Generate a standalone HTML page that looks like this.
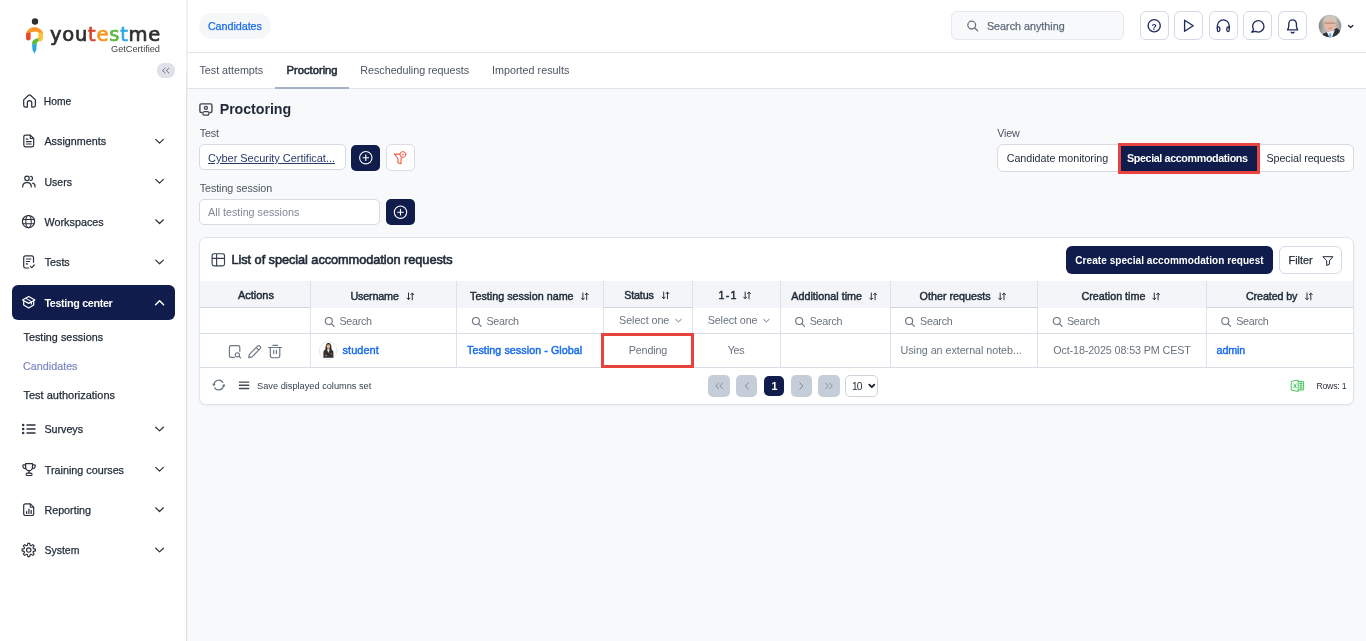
<!DOCTYPE html>
<html lang="en">
<head>
<meta charset="utf-8">
<title>Proctoring - Special accommodations</title>
<style>
*{box-sizing:border-box;margin:0;padding:0}
html,body{width:1366px;height:641px;overflow:hidden;background:#f8f9fb;font-family:"Liberation Sans",Arial,sans-serif;color:#1f2937;font-size:11px}
.t{position:absolute;white-space:pre;line-height:16px;height:16px}
.b{position:absolute}
svg{position:absolute;overflow:visible;fill:none;stroke-linecap:round;stroke-linejoin:round}
#txt{position:absolute;left:0;top:0;width:1366px;height:641px;will-change:transform}

</style>
</head>
<body>
<div class="b" style="left:0px;top:0px;width:186px;height:641px;background:#fff"></div>
<div class="b" style="left:186px;top:0px;width:1px;height:72px;background:#ebeef2"></div>
<div class="b" style="left:186px;top:72px;width:1px;height:569px;background:#dfe3e9"></div>
<div class="b" style="left:187px;top:0px;width:1px;height:641px;background:#f1f3f6"></div>
<div class="b" style="left:188px;top:0px;width:1178px;height:52px;background:#fff"></div>
<div class="b" style="left:187px;top:52px;width:1179px;height:1px;background:#dfe4ea"></div>
<div class="b" style="left:188px;top:53px;width:1178px;height:35px;background:#fff"></div>
<div class="b" style="left:187px;top:88px;width:1179px;height:1px;background:#e1e5eb"></div>
<div class="b" style="left:275px;top:87px;width:74px;height:2px;background:#a7b0c9"></div>
<div class="b" style="left:157px;top:63.4px;width:18px;height:14.3px;background:#dfe3e9;border-radius:6.5px"></div>
<div class="b" style="left:11.5px;top:285px;width:163.7px;height:35px;background:#101d4c;border-radius:6px"></div>
<div class="b" style="left:198.5px;top:12.5px;width:72.5px;height:26.5px;background:#f6f7f9;border-radius:14px"></div>
<div class="b" style="left:951px;top:11px;width:173px;height:29px;background:#f8f9fb;border:1px solid #e5e8ee;border-radius:6px"></div>
<div class="b" style="left:1139.7px;top:11.2px;width:29px;height:29px;background:#fff;border:1px solid #d3d9e5;border-radius:6px"></div>
<div class="b" style="left:1174.2px;top:11.2px;width:29px;height:29px;background:#fff;border:1px solid #d3d9e5;border-radius:6px"></div>
<div class="b" style="left:1209px;top:11.2px;width:29px;height:29px;background:#fff;border:1px solid #d3d9e5;border-radius:6px"></div>
<div class="b" style="left:1243.4px;top:11.2px;width:29px;height:29px;background:#fff;border:1px solid #d3d9e5;border-radius:6px"></div>
<div class="b" style="left:1278.2px;top:11.2px;width:29px;height:29px;background:#fff;border:1px solid #d3d9e5;border-radius:6px"></div>
<div class="b" style="left:199px;top:144px;width:147px;height:26.3px;background:#fff;border:1px solid #d5dae3;border-radius:5px"></div>
<div class="b" style="left:351.2px;top:144.6px;width:29px;height:26px;background:#101d4c;border-radius:5px"></div>
<div class="b" style="left:386.2px;top:144.4px;width:28.7px;height:26.3px;background:#fff;border:1px solid #d8dde6;border-radius:5px"></div>
<div class="b" style="left:199px;top:198.7px;width:181.3px;height:26.3px;background:#fff;border:1px solid #d5dae3;border-radius:5px"></div>
<div class="b" style="left:386px;top:199.2px;width:29px;height:26px;background:#101d4c;border-radius:5px"></div>
<div class="b" style="left:996.5px;top:144px;width:357.3px;height:28px;background:#fff;border:1px solid #d5dae3;border-radius:6px"></div>
<div class="b" style="left:1118px;top:143px;width:142px;height:31px;background:#e9433f"></div>
<div class="b" style="left:1121px;top:146px;width:136px;height:25px;background:#101d4c"></div>
<div class="b" style="left:198.7px;top:237px;width:1155.3px;height:167.8px;background:#fff;border:1px solid #dfe3ea;border-radius:7px;box-shadow:0 1px 2px rgba(16,24,40,.05)"></div>
<div class="b" style="left:1066.2px;top:246px;width:206.6px;height:27.5px;background:#101d4c;border-radius:6px"></div>
<div class="b" style="left:1279.1px;top:246px;width:62.6px;height:27.5px;background:#fff;border:1px solid #d5dbe6;border-radius:6px"></div>
<div class="b" style="left:199.7px;top:281px;width:1153.3px;height:26.8px;background:#f3f5f8"></div>
<div class="b" style="left:199.7px;top:307px;width:110.30000000000001px;height:1px;background:#cfd6e0"></div>
<div class="b" style="left:603.5px;top:307px;width:89.0px;height:1px;background:#cfd6e0"></div>
<div class="b" style="left:890.7px;top:307px;width:146.70000000000005px;height:1px;background:#cfd6e0"></div>
<div class="b" style="left:1206.5px;top:307px;width:146.5px;height:1px;background:#cfd6e0"></div>
<div class="b" style="left:199.7px;top:333px;width:1153.3px;height:1px;background:#d9dee6"></div>
<div class="b" style="left:199.7px;top:367px;width:1153.3px;height:1px;background:#d9dee6"></div>
<div class="b" style="left:309.5px;top:281px;width:1px;height:87px;background:#dde2ea"></div>
<div class="b" style="left:456px;top:281px;width:1px;height:87px;background:#dde2ea"></div>
<div class="b" style="left:603px;top:281px;width:1px;height:87px;background:#dde2ea"></div>
<div class="b" style="left:692.3px;top:281px;width:1px;height:87px;background:#dde2ea"></div>
<div class="b" style="left:780px;top:281px;width:1px;height:87px;background:#dde2ea"></div>
<div class="b" style="left:890.3px;top:281px;width:1px;height:87px;background:#dde2ea"></div>
<div class="b" style="left:1037px;top:281px;width:1px;height:87px;background:#dde2ea"></div>
<div class="b" style="left:1206.2px;top:281px;width:1px;height:87px;background:#dde2ea"></div>
<div class="b" style="left:601.3px;top:333.3px;width:92.6px;height:34.5px;border:3px solid #e8423f"></div>
<div class="b" style="left:708.4px;top:375.1px;width:21.5px;height:21.5px;background:#c5cdd8;border-radius:5px"></div>
<div class="b" style="left:735.8px;top:375.1px;width:21.5px;height:21.5px;background:#c5cdd8;border-radius:5px"></div>
<div class="b" style="left:790.7px;top:375.1px;width:21.5px;height:21.5px;background:#c5cdd8;border-radius:5px"></div>
<div class="b" style="left:818px;top:375.1px;width:21.5px;height:21.5px;background:#c5cdd8;border-radius:5px"></div>
<div class="b" style="left:763.8px;top:375.7px;width:20.4px;height:20.2px;background:#101d4c;border-radius:5px"></div>
<div class="b" style="left:845.3px;top:375px;width:33px;height:21.5px;background:#fff;border:1px solid #cdd3dd;border-radius:5px"></div>
<svg width="1366" height="641" viewBox="0 0 1366 641" style="left:0;top:0">
<path d="M165.2 68.2 L162.6 70.6 L165.2 73 M168.9 68.2 L166.3 70.6 L168.9 73" stroke="#5b6577" stroke-width="0.9"/>
<circle cx="35" cy="21.5" r="3.2" fill="#2e2e2e" stroke="none"/>
<path d="M38.3 31.2 L42.95 32.2 V37.3 C42.95 40 41.5 41.6 39.3 41.6 L38.3 41.6 Z" fill="#fbc531" stroke="none"/>
<path d="M26.1 33.1 L30.6 31.4 V38.2 A2.25 2.25 0 0 1 26.1 38.2 Z" fill="#e8452c" stroke="none"/>
<path d="M26.2 33.3 C27.4 29.2 31 27.3 34.5 27.3 C38 27.3 41.6 29.2 42.95 32.8 L38.3 32.4 C37.4 31.9 36 31.75 34.5 31.75 C33 31.75 31.6 31.9 30.5 32.4 Z" fill="#f9972b" stroke="none"/>
<path d="M38.5 37.9 C35 38.6 32.1 40 32.1 43.2 V44.6 H36.7 V43.6 C36.7 42.5 37.4 41.9 38.5 41.6 Z" fill="#5cbb3c" stroke="none"/>
<path d="M32.1 44.2 H36.7 L36.3 50 L34.4 53.6 L32.5 50 Z" fill="#2aa7e1" stroke="none"/>
<path d="M155.7 139.39999999999998 L159.55 143.1 L163.4 139.39999999999998" stroke="#2b313c" stroke-width="1.2" fill="none" />
<path d="M155.7 179.39999999999998 L159.55 183.1 L163.4 179.39999999999998" stroke="#2b313c" stroke-width="1.2" fill="none" />
<path d="M155.7 219.79999999999998 L159.55 223.5 L163.4 219.79999999999998" stroke="#2b313c" stroke-width="1.2" fill="none" />
<path d="M155.7 260.09999999999997 L159.55 263.79999999999995 L163.4 260.09999999999997" stroke="#2b313c" stroke-width="1.2" fill="none" />
<path d="M155.7 427.2 L159.55 430.9 L163.4 427.2" stroke="#2b313c" stroke-width="1.2" fill="none" />
<path d="M155.7 467.4 L159.55 471.09999999999997 L163.4 467.4" stroke="#2b313c" stroke-width="1.2" fill="none" />
<path d="M155.7 507.8 L159.55 511.5 L163.4 507.8" stroke="#2b313c" stroke-width="1.2" fill="none" />
<path d="M155.7 548.2 L159.55 551.9 L163.4 548.2" stroke="#2b313c" stroke-width="1.2" fill="none" />
<path d="M155.6 304.7 L159.6 300.8 L163.6 304.7" stroke="#ffffff" stroke-width="1.5" fill="none" />
<path d="M27.35 107 H25.4 a1.7 1.7 0 0 1 -1.7 -1.7 V99.9 L28.6 95.3 a1.4 1.4 0 0 1 1.9 0 L35.4 99.9 V105.3 a1.7 1.7 0 0 1 -1.7 1.7 H31.75 V102.7 a2.2 2.2 0 0 0 -4.4 0 Z" stroke="#2b313c" stroke-width="1.25" fill="none" />
<path d="M23.8 136.8 a1.7 1.7 0 0 1 1.7 -1.7 H30.3 L33.7 138.5 V145.1 a1.7 1.7 0 0 1 -1.7 1.7 H25.5 a1.7 1.7 0 0 1 -1.7 -1.7 Z" stroke="#2b313c" stroke-width="1.2" fill="none" />
<path d="M30.3 135.3 V138.5 H33.5" stroke="#2b313c" stroke-width="1.1" fill="none" />
<path d="M26.4 141.6 H31.2 M26.4 144 H31.2 M26.4 139.2 H27.8" stroke="#2b313c" stroke-width="1.2" fill="none" />
<circle cx="27" cy="178.3" r="2.25" stroke="#2b313c" stroke-width="1.2" fill="none"/>
<path d="M30.4 176.2 a2.1 2.1 0 0 1 0 4.2" stroke="#2b313c" stroke-width="1.15" fill="none" />
<path d="M22.7 187 V186.3 a3.6 3.6 0 0 1 3.6 -3.6 H27.7 a3.6 3.6 0 0 1 3.6 3.6 V187" stroke="#2b313c" stroke-width="1.2" fill="none" />
<path d="M32.6 183.1 a3 3 0 0 1 2.4 3 V187" stroke="#2b313c" stroke-width="1.2" fill="none" />
<circle cx="28.5" cy="221.6" r="6.1" stroke="#2b313c" stroke-width="1.2" fill="none"/>
<ellipse cx="28.5" cy="221.6" rx="2.7" ry="6.1" stroke="#2b313c" stroke-width="1.05"/>
<path d="M22.9 219.5 H34.1 M22.9 223.7 H34.1" stroke="#2b313c" stroke-width="1.1" fill="none" />
<path d="M33.5 262.2 V257.6 a1.7 1.7 0 0 0 -1.7 -1.7 H25.4 a1.7 1.7 0 0 0 -1.7 1.7 V266.3 a1.7 1.7 0 0 0 1.7 1.7 H28.8" stroke="#2b313c" stroke-width="1.2" fill="none" />
<path d="M26.3 259 H30.9 M26.3 261.5 H29.6 M26.3 263.9 H27.5" stroke="#2b313c" stroke-width="1.2" fill="none" />
<path d="M30.4 266.3 L31.8 267.7 L34.3 265" stroke="#2b313c" stroke-width="1.2" fill="none" />
<path d="M22.5 300 L28.7 296.5 L34.9 300 L28.7 303.4 Z" stroke="#ffffff" stroke-width="1.2" fill="none" />
<path d="M23.7 301.2 V305 L28.7 307.9 L33.7 305 V301.2" stroke="#ffffff" stroke-width="1.2" fill="none" />
<path d="M26 298.4 L31.4 301.6 V304" stroke="#ffffff" stroke-width="1.1" fill="none" />
<circle cx="23.2" cy="425.1" r="1.25" fill="#2b313c" stroke="none"/>
<path d="M27 425.1 H35" stroke="#2b313c" stroke-width="1.5" fill="none" />
<circle cx="23.2" cy="429.1" r="1.25" fill="#2b313c" stroke="none"/>
<path d="M27 429.1 H35" stroke="#2b313c" stroke-width="1.5" fill="none" />
<circle cx="23.2" cy="433.1" r="1.25" fill="#2b313c" stroke="none"/>
<path d="M27 433.1 H35" stroke="#2b313c" stroke-width="1.5" fill="none" />
<path d="M25.6 463.6 H32.5 V467 a3.45 3.7 0 0 1 -6.9 0 Z" stroke="#2b313c" stroke-width="1.2" fill="none" />
<path d="M25.6 464.9 H23.7 a0.9 0.9 0 0 0 -0.9 0.9 a2.9 2.9 0 0 0 2.9 2.9 M32.5 464.9 H34.4 a0.9 0.9 0 0 1 0.9 0.9 a2.9 2.9 0 0 1 -2.9 2.9" stroke="#2b313c" stroke-width="1.1" fill="none" />
<path d="M29.05 470.9 V472.9" stroke="#2b313c" stroke-width="1.3" fill="none" />
<path d="M26.1 474.2 a1.1 1.1 0 0 1 1.1 -1.1 h3.7 a1.1 1.1 0 0 1 1.1 1.1 v0.2 a1.1 1.1 0 0 1 -1.1 1.1 h-3.7 a1.1 1.1 0 0 1 -1.1 -1.1 Z" stroke="#2b313c" stroke-width="1.15" fill="none" />
<path d="M23.7 505.5 a1.7 1.7 0 0 1 1.7 -1.7 H30.3 L33.7 507.2 V513.8 a1.7 1.7 0 0 1 -1.7 1.7 H25.4 a1.7 1.7 0 0 1 -1.7 -1.7 Z" stroke="#2b313c" stroke-width="1.2" fill="none" />
<path d="M30.3 504 V507.2 H33.5" stroke="#2b313c" stroke-width="1.1" fill="none" />
<path d="M26.6 513.4 V511.7 M28.9 513.4 V509 M31.2 513.4 V510.3" stroke="#2b313c" stroke-width="1.25" fill="none" />
<path d="M27.37 545.40 L27.85 543.31 L29.65 543.31 L30.13 545.40 L31.03 545.78 L32.85 544.63 L34.12 545.90 L32.97 547.72 L33.35 548.62 L35.44 549.10 L35.44 550.90 L33.35 551.38 L32.97 552.28 L34.12 554.10 L32.85 555.37 L31.03 554.22 L30.13 554.60 L29.65 556.69 L27.85 556.69 L27.37 554.60 L26.47 554.22 L24.65 555.37 L23.38 554.10 L24.53 552.28 L24.15 551.38 L22.06 550.90 L22.06 549.10 L24.15 548.62 L24.53 547.72 L23.38 545.90 L24.65 544.63 L26.47 545.78 Z" stroke="#2b313c" stroke-width="1.15" fill="none" />
<circle cx="28.75" cy="550" r="2.2" stroke="#2b313c" stroke-width="1.15" fill="none"/>
<circle cx="971.7" cy="25.1" r="3.9" stroke="#6b7280" stroke-width="1.3" fill="none"/>
<path d="M974.6 28 L977.6 30.8" stroke="#6b7280" stroke-width="1.3" fill="none" />
<circle cx="1154.2" cy="25.7" r="6.1" stroke="#1f2a5c" stroke-width="1.35" fill="none"/>
<path d="M1184.6 20.2 V31.2 L1193.2 25.7 Z" stroke="#1f2a5c" stroke-width="1.35" fill="none" />
<path d="M1217.4 28.6 V25.8 a5.9 5.9 0 0 1 11.8 0 V28.6" stroke="#1f2a5c" stroke-width="1.35" fill="none" />
<path d="M1217.4 26.9 h0.9 a1.5 1.5 0 0 1 1.5 1.5 v1.7 a1.5 1.5 0 0 1 -1.5 1.5 h-0 a0.9 1.5 0 0 1 -0.9 -1.5 Z" stroke="#1f2a5c" stroke-width="1.3" fill="none" />
<path d="M1229.2 26.9 h-0.9 a1.5 1.5 0 0 0 -1.5 1.5 v1.7 a1.5 1.5 0 0 0 1.5 1.5 h0 a0.9 1.5 0 0 0 0.9 -1.5 Z" stroke="#1f2a5c" stroke-width="1.3" fill="none" />
<path d="M1253.6 29.6 A5.7 5.7 0 1 1 1255.6 31.4 L1251.8 32.2 Z" stroke="#1f2a5c" stroke-width="1.35" fill="none" />
<path d="M1287.5 29.8 H1297.7 C1296.4 28.4 1296.4 26.8 1296.4 23.6 a3.8 3.8 0 0 0 -7.6 0 C1288.8 26.8 1288.8 28.4 1287.5 29.8 Z" stroke="#1f2a5c" stroke-width="1.35" fill="none" />
<path d="M1291.2 32.1 a1.6 1.6 0 0 0 2.8 0" stroke="#1f2a5c" stroke-width="1.35" fill="none" />
<path d="M1348.5 25.4 L1350.7 27.5 L1352.9 25.4" stroke="#273142" stroke-width="1.35" fill="none" />
<defs>
<clipPath id="avc"><circle cx="1330" cy="26" r="11.3"/></clipPath>
<linearGradient id="avg" x1="0" y1="0" x2="1" y2="0"><stop offset="0" stop-color="#7c7c7a"/><stop offset="0.25" stop-color="#b4b4b2"/><stop offset="0.7" stop-color="#c4c4c2"/><stop offset="1" stop-color="#8c8c8a"/></linearGradient>
<clipPath id="stc"><circle cx="328.2" cy="350.5" r="8.2"/></clipPath>
</defs>
<g clip-path="url(#avc)" stroke="none">
<rect x="1318" y="14" width="24" height="24" fill="url(#avg)"/>
<path d="M1320 38 C1321 34.5 1324 33 1327 32.3 L1333 30.5 L1336.5 28 C1339.5 29 1341.5 32 1342 38 Z" fill="#2d303b"/>
<path d="M1326.8 32 L1329.6 38 L1331.8 38 L1334.8 30 Z" fill="#eef1f5"/>
<path d="M1329.2 33.2 L1331 33.2 L1331.4 38 L1328.8 38 Z" fill="#7fa9dc"/>
<ellipse cx="1330" cy="24.6" rx="5.8" ry="6.6" fill="#e8b8a4"/>
<path d="M1323.8 23.6 C1323 17.6 1327 15.4 1330.2 15.4 C1334 15.4 1336.8 17.8 1336.2 23.6 C1335.4 20.6 1333.4 19.4 1330 19.5 C1327 19.6 1324.8 20.6 1323.8 23.6 Z" fill="#cfc8ba"/>
<rect x="1324.8" y="22.6" width="10.4" height="1.2" fill="#8a6f64" opacity="0.6"/>
<ellipse cx="1330" cy="28.2" rx="2.2" ry="0.8" fill="#c98b7c" opacity="0.7"/>
</g>
<circle cx="328.1" cy="350.6" r="8.8" fill="#ffffff" stroke="#dde3ec" stroke-width="0.8"/>
<g stroke="none">
<path d="M325.6 351 C325 345.4 326.6 343 328.4 343 C330.4 343 332 345.4 331.4 351 Z" fill="#2e1c18"/>
<ellipse cx="328.4" cy="346.6" rx="1.75" ry="2.3" fill="#e2b197"/>
<path d="M323.4 357.8 V352.4 C323.4 350.6 324.6 349.6 326.6 349.3 L330.2 349.3 C332.2 349.6 333.4 350.6 333.4 352.4 V357.8 Z" fill="#33312f"/>
<path d="M327 349.2 L328.4 353 L329.8 349.2 Z" fill="#f4f4f4"/>
<rect x="325.4" y="355" width="1.6" height="1.1" fill="#c9966f"/><rect x="330.6" y="353.2" width="1.3" height="1.1" fill="#a87650"/>
</g>
<path d="M201.6 112.5 H201.2 a1.3 1.3 0 0 1 -1.3 -1.3 V105.2 a1.3 1.3 0 0 1 1.3 -1.3 H210.6 a1.3 1.3 0 0 1 1.3 1.3 V111.2 a1.3 1.3 0 0 1 -1.3 1.3 H210.2" stroke="#3a414c" stroke-width="1.35" fill="none" />
<circle cx="205.9" cy="107.8" r="1.55" stroke="#3a414c" stroke-width="1.25" fill="none"/>
<path d="M202.8 113.2 a1.6 1.6 0 0 1 1.6 -1.6 H207.4 a1.6 1.6 0 0 1 1.6 1.6 V113.6 a1.6 1.6 0 0 1 -1.6 1.6 H204.4 a1.6 1.6 0 0 1 -1.6 -1.6 Z" stroke="#3a414c" stroke-width="1.25" fill="none" />
<circle cx="365.8" cy="157.7" r="6.2" stroke="#ffffff" stroke-width="1.1" fill="none"/>
<path d="M363.0 157.7 H368.6 M365.8 154.89999999999998 V160.5" stroke="#ffffff" stroke-width="1.15" fill="none" />
<circle cx="400.5" cy="212.2" r="6.2" stroke="#ffffff" stroke-width="1.1" fill="none"/>
<path d="M397.7 212.2 H403.3 M400.5 209.39999999999998 V215.0" stroke="#ffffff" stroke-width="1.15" fill="none" />
<path d="M399.9 154.1 H394.5 L397.9 158.5 V162.7 L401 163.7 V158.5 L402.2 157.3" stroke="#f4553f" stroke-width="1.05" fill="none" />
<circle cx="402.9" cy="154.5" r="2.9" stroke="#f4553f" stroke-width="1.0" fill="none"/>
<circle cx="402.9" cy="154.5" r="0.85" fill="#f4553f" stroke="none"/>
<path d="M212.1 255.6 a1.9 1.9 0 0 1 1.9 -1.9 H222.6 a1.9 1.9 0 0 1 1.9 1.9 V263.9 a1.9 1.9 0 0 1 -1.9 1.9 H214 a1.9 1.9 0 0 1 -1.9 -1.9 Z M212.1 258.3 H224.5 M216.6 253.7 V265.8" stroke="#374151" stroke-width="1.15" fill="none" />
<path d="M1323.2 256.7 H1332.9 L1329.4 260.9 V264.3 L1326.7 265.4 V260.9 Z" stroke="#1f2937" stroke-width="1.0" fill="none" />
<path d="M408.5 293.0 V299.59999999999997 M407.0 298.09999999999997 L408.5 299.7 L410.0 298.09999999999997" stroke="#1f2937" stroke-width="0.95" fill="none" />
<path d="M412.29999999999995 299.79999999999995 V293.2 M410.79999999999995 294.7 L412.29999999999995 293.09999999999997 L413.79999999999995 294.7" stroke="#1f2937" stroke-width="0.95" fill="none" />
<path d="M582.9 293.0 V299.59999999999997 M581.4 298.09999999999997 L582.9 299.7 L584.4 298.09999999999997" stroke="#1f2937" stroke-width="0.95" fill="none" />
<path d="M586.6999999999999 299.79999999999995 V293.2 M585.1999999999999 294.7 L586.6999999999999 293.09999999999997 L588.1999999999999 294.7" stroke="#1f2937" stroke-width="0.95" fill="none" />
<path d="M663.7 292.0 V298.59999999999997 M662.2 297.09999999999997 L663.7 298.7 L665.2 297.09999999999997" stroke="#1f2937" stroke-width="0.95" fill="none" />
<path d="M667.5 298.79999999999995 V292.2 M666.0 293.7 L667.5 292.09999999999997 L669.0 293.7" stroke="#1f2937" stroke-width="0.95" fill="none" />
<path d="M745.2 292.0 V298.59999999999997 M743.7 297.09999999999997 L745.2 298.7 L746.7 297.09999999999997" stroke="#1f2937" stroke-width="0.95" fill="none" />
<path d="M749.0 298.79999999999995 V292.2 M747.5 293.7 L749.0 292.09999999999997 L750.5 293.7" stroke="#1f2937" stroke-width="0.95" fill="none" />
<path d="M871.3000000000001 293.0 V299.59999999999997 M869.8000000000001 298.09999999999997 L871.3000000000001 299.7 L872.8000000000001 298.09999999999997" stroke="#1f2937" stroke-width="0.95" fill="none" />
<path d="M875.1 299.79999999999995 V293.2 M873.6 294.7 L875.1 293.09999999999997 L876.6 294.7" stroke="#1f2937" stroke-width="0.95" fill="none" />
<path d="M1000.2 293.0 V299.59999999999997 M998.7 298.09999999999997 L1000.2 299.7 L1001.7 298.09999999999997" stroke="#1f2937" stroke-width="0.95" fill="none" />
<path d="M1004.0 299.79999999999995 V293.2 M1002.5 294.7 L1004.0 293.09999999999997 L1005.5 294.7" stroke="#1f2937" stroke-width="0.95" fill="none" />
<path d="M1154.3 293.0 V299.59999999999997 M1152.8 298.09999999999997 L1154.3 299.7 L1155.8 298.09999999999997" stroke="#1f2937" stroke-width="0.95" fill="none" />
<path d="M1158.1000000000001 299.79999999999995 V293.2 M1156.6000000000001 294.7 L1158.1000000000001 293.09999999999997 L1159.6000000000001 294.7" stroke="#1f2937" stroke-width="0.95" fill="none" />
<path d="M1307.0 293.0 V299.59999999999997 M1305.5 298.09999999999997 L1307.0 299.7 L1308.5 298.09999999999997" stroke="#1f2937" stroke-width="0.95" fill="none" />
<path d="M1310.8000000000002 299.79999999999995 V293.2 M1309.3000000000002 294.7 L1310.8000000000002 293.09999999999997 L1312.3000000000002 294.7" stroke="#1f2937" stroke-width="0.95" fill="none" />
<circle cx="328.79999999999995" cy="321.0" r="3.5" stroke="#6b7280" stroke-width="1.1" fill="none"/>
<path d="M331.4 323.6 L334.09999999999997 326.3" stroke="#6b7280" stroke-width="1.1" fill="none" />
<circle cx="475.9" cy="321.0" r="3.5" stroke="#6b7280" stroke-width="1.1" fill="none"/>
<path d="M478.5 323.6 L481.2 326.3" stroke="#6b7280" stroke-width="1.1" fill="none" />
<circle cx="799.1999999999999" cy="321.0" r="3.5" stroke="#6b7280" stroke-width="1.1" fill="none"/>
<path d="M801.8 323.6 L804.5 326.3" stroke="#6b7280" stroke-width="1.1" fill="none" />
<circle cx="909.1" cy="321.0" r="3.5" stroke="#6b7280" stroke-width="1.1" fill="none"/>
<path d="M911.7 323.6 L914.4000000000001 326.3" stroke="#6b7280" stroke-width="1.1" fill="none" />
<circle cx="1056.8000000000002" cy="321.0" r="3.5" stroke="#6b7280" stroke-width="1.1" fill="none"/>
<path d="M1059.4 323.6 L1062.1000000000001 326.3" stroke="#6b7280" stroke-width="1.1" fill="none" />
<circle cx="1225.3000000000002" cy="321.0" r="3.5" stroke="#6b7280" stroke-width="1.1" fill="none"/>
<path d="M1227.9 323.6 L1230.6000000000001 326.3" stroke="#6b7280" stroke-width="1.1" fill="none" />
<path d="M675.7 319.3 L678.5 321.9 L681.3000000000001 319.3" stroke="#6b7280" stroke-width="1.0" fill="none" />
<path d="M763.6 319.3 L766.4 321.9 L769.2 319.3" stroke="#6b7280" stroke-width="1.0" fill="none" />
<path d="M239.8 351.5 V347.2 a1.6 1.6 0 0 0 -1.6 -1.6 H231 a1.6 1.6 0 0 0 -1.6 1.6 V355.8 a1.6 1.6 0 0 0 1.6 1.6 H234.6" stroke="#6b7685" stroke-width="1.15" fill="none" />
<circle cx="237.4" cy="354.8" r="2.1" stroke="#6b7685" stroke-width="1.1" fill="none"/>
<path d="M239 356.4 L240.7 358" stroke="#6b7685" stroke-width="1.1" fill="none" />
<path d="M248.7 357.6 L249.4 354.3 L257.6 346.1 a1.55 1.55 0 0 1 2.2 0 L260.2 346.5 a1.55 1.55 0 0 1 0 2.2 L252 356.9 Z M256.2 347.6 L258.8 350.2" stroke="#6b7685" stroke-width="1.15" fill="none" />
<path d="M268.6 347.5 H281.5 M272.9 345.4 H277.6 M270.3 347.7 V355.6 a2.1 2.1 0 0 0 2.1 2.1 H277.7 a2.1 2.1 0 0 0 2.1 -2.1 V347.7 M273.7 350.2 V353.6 M276.4 350.2 V353.6" stroke="#6b7685" stroke-width="1.15" fill="none" />
<path d="M214.1 383.9 A4.9 4.9 0 0 1 222.9 382.3" stroke="#617181" stroke-width="1.2" fill="none" />
<path d="M223.5 386.1 A4.9 4.9 0 0 1 214.7 387.8" stroke="#617181" stroke-width="1.2" fill="none" />
<path d="M212.3 383.5 L215.7 384.2 L213.3 386.3 Z" fill="#617181" stroke="none"/>
<path d="M225.3 386.6 L221.9 385.9 L224.3 383.8 Z" fill="#617181" stroke="none"/>
<path d="M238.9 382.1 H249.2 M238.9 385.2 H249.2 M238.9 388.4 H249.2" stroke="#454c58" stroke-width="1.45" fill="none" stroke-linecap="butt"/>
<path d="M718.6 383.1 L715.9 385.9 L718.6 388.7 M722.6 383.1 L719.9 385.9 L722.6 388.7" stroke="#7d8898" stroke-width="0.9" fill="none" />
<path d="M748.4 382.8 L745.3 386 L748.4 389.2" stroke="#7d8898" stroke-width="1.0" fill="none" />
<path d="M799.8 382.8 L802.9 386 L799.8 389.2" stroke="#7d8898" stroke-width="1.0" fill="none" />
<path d="M825.6 383.1 L828.3 385.9 L825.6 388.7 M829.6 383.1 L832.3 385.9 L829.6 388.7" stroke="#7d8898" stroke-width="0.9" fill="none" />
<path d="M869.3 384.6 L871.8 387.1 L874.3 384.6" stroke="#111827" stroke-width="1.7" fill="none" />
<path d="M1291.6 381.3 L1298.2 380.1 V391.4 L1291.6 390.2 Z" stroke="#35be4f" stroke-width="0.9" fill="none" />
<path d="M1298.4 381.6 H1303.6 V389.9 H1298.4" stroke="#35be4f" stroke-width="0.9" fill="none" />
<path d="M1293.6 383.8 L1296.4 387.8 M1296.4 383.8 L1293.6 387.8" stroke="#35be4f" stroke-width="0.9" fill="none" />
<path d="M1299.6 383.6 H1302.4 M1299.6 385.7 H1302.4 M1299.6 387.8 H1302.4 M1301 381.8 V389.7" stroke="#35be4f" stroke-width="0.8" fill="none" />
</svg>

<div id="txt">
<span class="t" style="left:43.75px;top:94px;font-size:10.25px;letter-spacing:0.053px;color:#1f2937;-webkit-text-stroke:0.25px #1f2937;">Home</span>
<span class="t" style="left:44.40px;top:133px;font-size:10.75px;letter-spacing:0.031px;color:#1f2937;-webkit-text-stroke:0.25px #1f2937;">Assignments</span>
<span class="t" style="left:44.40px;top:174px;font-size:10.5px;letter-spacing:0.070px;color:#1f2937;-webkit-text-stroke:0.25px #1f2937;">Users</span>
<span class="t" style="left:44.40px;top:214px;font-size:10.75px;letter-spacing:0.045px;color:#1f2937;-webkit-text-stroke:0.25px #1f2937;">Workspaces</span>
<span class="t" style="left:44.75px;top:254px;font-size:10.75px;letter-spacing:-0.023px;color:#1f2937;-webkit-text-stroke:0.25px #1f2937;">Tests</span>
<span class="t" style="left:44.40px;top:295px;font-size:10.75px;letter-spacing:-0.333px;color:#ffffff;font-weight:700;">Testing center</span>
<span class="t" style="left:23.50px;top:329px;font-size:10.75px;letter-spacing:0.048px;color:#1f2937;-webkit-text-stroke:0.25px #1f2937;">Testing sessions</span>
<span class="t" style="left:23.10px;top:358px;font-size:10.75px;letter-spacing:0.001px;color:#7b86c4;-webkit-text-stroke:0.2px #7b86c4;">Candidates</span>
<span class="t" style="left:23.50px;top:387px;font-size:11px;letter-spacing:-0.012px;color:#1f2937;-webkit-text-stroke:0.25px #1f2937;">Test authorizations</span>
<span class="t" style="left:44.40px;top:421px;font-size:10.75px;letter-spacing:-0.022px;color:#1f2937;-webkit-text-stroke:0.25px #1f2937;">Surveys</span>
<span class="t" style="left:44.75px;top:462px;font-size:10.75px;letter-spacing:0.012px;color:#1f2937;-webkit-text-stroke:0.25px #1f2937;">Training courses</span>
<span class="t" style="left:44.40px;top:502px;font-size:10.75px;letter-spacing:-0.001px;color:#1f2937;-webkit-text-stroke:0.25px #1f2937;">Reporting</span>
<span class="t" style="left:44.40px;top:542px;font-size:10.5px;letter-spacing:-0.002px;color:#1f2937;-webkit-text-stroke:0.25px #1f2937;">System</span>
<span class="t" style="left:111.00px;top:41px;font-size:9.25px;letter-spacing:-0.032px;color:#444444;">GetCertified</span>
<span class="t" style="left:207.90px;top:18px;font-size:10.75px;letter-spacing:-0.043px;color:#1a6cf0;-webkit-text-stroke:0.25px #1a6cf0;">Candidates</span>
<span class="t" style="left:986.90px;top:18px;font-size:10.75px;letter-spacing:0.008px;color:#5f6b7c;-webkit-text-stroke:0.25px #5f6b7c;">Search anything</span>
<span class="t" style="left:199.50px;top:62px;font-size:10.75px;letter-spacing:-0.027px;color:#4b5563;">Test attempts</span>
<span class="t" style="left:286.50px;top:62px;font-size:11.25px;letter-spacing:-0.019px;color:#1f2937;-webkit-text-stroke:0.55px #1f2937;">Proctoring</span>
<span class="t" style="left:360.30px;top:62px;font-size:10.75px;letter-spacing:-0.028px;color:#4b5563;">Rescheduling requests</span>
<span class="t" style="left:492.00px;top:62px;font-size:10.75px;letter-spacing:0.022px;color:#4b5563;">Imported results</span>
<span class="t" style="left:219.70px;top:101px;font-size:14.25px;letter-spacing:-0.061px;color:#1f2937;font-weight:700;">Proctoring</span>
<span class="t" style="left:199.70px;top:125px;font-size:10.75px;letter-spacing:-0.139px;color:#4b5563;">Test</span>
<span class="t" style="left:208.10px;top:150px;font-size:11px;letter-spacing:-0.032px;color:#2a3a6a;text-decoration:underline;text-underline-offset:1px;">Cyber Security Certificat...</span>
<span class="t" style="left:199.70px;top:180px;font-size:10.75px;letter-spacing:-0.071px;color:#4b5563;">Testing session</span>
<span class="t" style="left:208.10px;top:204px;font-size:10.75px;letter-spacing:-0.011px;color:#7f8997;">All testing sessions</span>
<span class="t" style="left:997.20px;top:125px;font-size:10.75px;letter-spacing:-0.136px;color:#4b5563;">View</span>
<span class="t" style="left:1006.70px;top:150px;font-size:10.75px;letter-spacing:-0.036px;color:#1f2937;">Candidate monitoring</span>
<span class="t" style="left:1127.00px;top:150px;font-size:10.75px;letter-spacing:-0.383px;color:#ffffff;font-weight:700;">Special accommodations</span>
<span class="t" style="left:1266.40px;top:150px;font-size:10.75px;letter-spacing:-0.058px;color:#1f2937;">Special requests</span>
<span class="t" style="left:231.50px;top:252px;font-size:12.75px;letter-spacing:-0.058px;color:#1f2937;-webkit-text-stroke:0.6px #1f2937;">List of special accommodation requests</span>
<span class="t" style="left:1075.30px;top:253px;font-size:10px;letter-spacing:0.063px;color:#ffffff;font-weight:700;">Create special accommodation request</span>
<span class="t" style="left:1288.60px;top:252px;font-size:10.75px;letter-spacing:0.002px;color:#1f2937;-webkit-text-stroke:0.25px #1f2937;">Filter</span>
<span class="t" style="left:238.00px;top:287px;font-size:11px;letter-spacing:-0.029px;color:#1f2937;-webkit-text-stroke:0.45px #1f2937;">Actions</span>
<span class="t" style="left:350.40px;top:288px;font-size:10.75px;letter-spacing:-0.155px;color:#1f2937;-webkit-text-stroke:0.45px #1f2937;">Username</span>
<span class="t" style="left:470.10px;top:288px;font-size:10.75px;letter-spacing:0.007px;color:#1f2937;-webkit-text-stroke:0.45px #1f2937;">Testing session name</span>
<span class="t" style="left:624.20px;top:287px;font-size:10.75px;letter-spacing:-0.155px;color:#1f2937;-webkit-text-stroke:0.45px #1f2937;">Status</span>
<span class="t" style="left:718.50px;top:287px;font-size:10.75px;letter-spacing:0.000px;color:#1f2937;word-spacing:-1.806px;-webkit-text-stroke:0.45px #1f2937;">1 - 1</span>
<span class="t" style="left:791.30px;top:288px;font-size:10.75px;letter-spacing:0.013px;color:#1f2937;-webkit-text-stroke:0.45px #1f2937;">Additional time</span>
<span class="t" style="left:919.60px;top:288px;font-size:10.75px;letter-spacing:-0.000px;color:#1f2937;-webkit-text-stroke:0.45px #1f2937;">Other requests</span>
<span class="t" style="left:1081.50px;top:288px;font-size:10.75px;letter-spacing:-0.002px;color:#1f2937;-webkit-text-stroke:0.45px #1f2937;">Creation time</span>
<span class="t" style="left:1245.90px;top:288px;font-size:10.75px;letter-spacing:-0.110px;color:#1f2937;-webkit-text-stroke:0.45px #1f2937;">Created by</span>
<span class="t" style="left:339.50px;top:313px;font-size:10.75px;letter-spacing:-0.332px;color:#69737f;">Search</span>
<span class="t" style="left:486.50px;top:313px;font-size:10.75px;letter-spacing:-0.312px;color:#69737f;">Search</span>
<span class="t" style="left:619.10px;top:312px;font-size:10.75px;letter-spacing:-0.067px;color:#69737f;">Select one</span>
<span class="t" style="left:707.70px;top:312px;font-size:10.75px;letter-spacing:-0.111px;color:#69737f;">Select one</span>
<span class="t" style="left:809.70px;top:313px;font-size:10.75px;letter-spacing:-0.252px;color:#69737f;">Search</span>
<span class="t" style="left:920.00px;top:313px;font-size:10.75px;letter-spacing:-0.252px;color:#69737f;">Search</span>
<span class="t" style="left:1066.90px;top:313px;font-size:10.75px;letter-spacing:-0.212px;color:#69737f;">Search</span>
<span class="t" style="left:1236.20px;top:313px;font-size:10.75px;letter-spacing:-0.292px;color:#69737f;">Search</span>
<span class="t" style="left:342.60px;top:342px;font-size:11px;letter-spacing:0.019px;color:#1a6cf0;-webkit-text-stroke:0.4px #1a6cf0;">student</span>
<span class="t" style="left:467.00px;top:342px;font-size:10.75px;letter-spacing:0.047px;color:#1a6cf0;-webkit-text-stroke:0.45px #1a6cf0;">Testing session - Global</span>
<span class="t" style="left:628.70px;top:342px;font-size:10.75px;letter-spacing:-0.142px;color:#69737f;">Pending</span>
<span class="t" style="left:727.80px;top:342px;font-size:10.75px;letter-spacing:-0.369px;color:#69737f;">Yes</span>
<span class="t" style="left:900.50px;top:342px;font-size:10.75px;letter-spacing:-0.048px;color:#69737f;">Using an external noteb...</span>
<span class="t" style="left:1053.20px;top:342px;font-size:10.75px;letter-spacing:-0.113px;color:#69737f;">Oct-18-2025 08:53 PM CEST</span>
<span class="t" style="left:1216.60px;top:342px;font-size:10.75px;letter-spacing:-0.145px;color:#1a6cf0;-webkit-text-stroke:0.4px #1a6cf0;">admin</span>
<span class="t" style="left:257.10px;top:378px;font-size:9.25px;letter-spacing:-0.018px;color:#374151;">Save displayed columns set</span>
<span class="t" style="left:771.50px;top:378px;font-size:10.75px;letter-spacing:-0.980px;color:#ffffff;font-weight:700;">1</span>
<span class="t" style="left:852.00px;top:379px;font-size:10.25px;letter-spacing:-1.002px;color:#1f2937;">10</span>
<span class="t" style="left:1316.40px;top:378px;font-size:8.75px;letter-spacing:-0.251px;color:#2b313b;">Rows: 1</span>
<span class="t" style="left:1151.60px;top:19px;font-size:8.5px;letter-spacing:0.007px;color:#1f2a5c;font-weight:700;">?</span>
<div class="t" style="left:50px;top:19.5px;height:30px;line-height:30px;font-size:19.5px;letter-spacing:0.75px;font-family:'DejaVu Sans','Liberation Sans',sans-serif;font-weight:400;-webkit-text-stroke:0.7px currentColor"><span style="color:#2e2e2e">you</span><span style="color:#d8432b">t</span><span style="color:#f7941d">e</span><span style="color:#5bb947">s</span><span style="color:#2aa7e1">t</span><span style="color:#2e2e2e">me</span></div>
</div>
</body>
</html>
